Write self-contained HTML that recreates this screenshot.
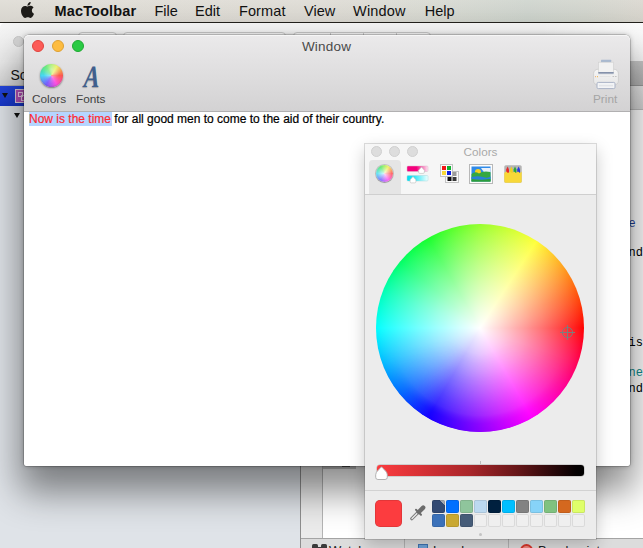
<!DOCTYPE html>
<html>
<head>
<meta charset="utf-8">
<title>MacToolbar</title>
<style>
html,body{margin:0;padding:0;}
body{width:643px;height:548px;overflow:hidden;position:relative;background:#fff;font-family:"Liberation Sans",sans-serif;}
.abs{position:absolute;}
/* ---------- background app (IDE) ---------- */
#bgwin{left:0;top:23px;width:643px;height:525px;background:#fff;border-top-left-radius:5px;overflow:hidden;}
#bgtitle{left:0;top:0;width:643px;height:38px;background:linear-gradient(#f6f6f6,#ebebeb);}
.tbbtn{top:9px;height:20px;border:1px solid #c9c9c9;border-radius:4px;background:linear-gradient(#fdfdfd,#f2f2f2);box-sizing:border-box;}
#bglight{left:13px;top:13px;width:11px;height:11px;border-radius:50%;background:#d6d6d6;border:1px solid #c8c8c8;box-sizing:border-box;}
#padhdr{left:0;top:38px;width:301px;height:25px;background:linear-gradient(#ececec,#d6d6d6);border-bottom:1px solid #b8b8b8;box-sizing:border-box;}
#padhdr span{position:absolute;left:10.5px;top:5.5px;font-size:14px;color:#111;}
#sidebar{left:0;top:63px;width:300px;height:462px;background:#dfe3e8;}
#selrow{left:0;top:63px;width:300px;height:20px;background:linear-gradient(#2547e0,#1636c8);}
.tri{width:0;height:0;border-left:3.7px solid transparent;border-right:3.7px solid transparent;border-top:5.5px solid #111;}
#picon{left:15px;top:66px;width:14px;height:14px;background:#b550b8;border:1px solid #e0d0e0;box-sizing:border-box;}
#rightdark{left:600px;top:38px;width:43px;height:25px;background:linear-gradient(#c6c6c6,#b4b4b4);border-bottom:1px solid #9a9a9a;box-sizing:border-box;}
#rightlite{left:600px;top:63px;width:43px;height:24px;background:linear-gradient(#e8e8e8,#d4d4d4);border-bottom:1px solid #bcbcbc;box-sizing:border-box;}
#vline1{left:300px;top:63px;width:1px;height:462px;background:#8e8e8e;}
#gutter{left:301px;top:63px;width:21px;height:452px;background:#ebebeb;}
#vline2{left:322px;top:63px;width:1px;height:452px;background:#b4b4b4;}
#hbar{left:323px;top:443px;width:33px;height:3px;background:#c6c6c6;}
.code{font-family:"Liberation Mono",monospace;font-size:12px;line-height:15px;white-space:pre;}
#bottombar{left:301px;top:515px;width:342px;height:10px;background:#dcdcdc;border-top:1px solid #a4a4a4;}
.bdiv{top:516px;width:1px;height:9px;background:#b4b4b4;}
.btxt{top:520px;font-size:13px;color:#222;white-space:nowrap;}
/* ---------- menu bar ---------- */
#menubar{left:0;top:0;width:643px;height:22px;background:linear-gradient(rgba(255,255,255,0.12),rgba(0,0,0,0.03)),linear-gradient(90deg,#dedbd4 0%,#dddad3 50%,#d6d8d0 68%,#cdd3cc 82%,#d1d4cc 91%,#d9d6ce 100%);border-bottom:1px solid #23211c;}
.mi{top:2px;font-size:14.5px;color:#111;white-space:nowrap;line-height:18px;}
/* ---------- front window ---------- */
#win{left:24px;top:35px;width:606px;height:431px;border-radius:5px 5px 2px 2px;background:#fff;box-shadow:0 0 0 0.5px rgba(0,0,0,0.3),0 22px 36px 4px rgba(0,0,0,0.45),0 0 5px rgba(0,0,0,0.28);}
#wtop{left:0;top:0;width:606px;height:76px;border-radius:5px 5px 0 0;background:linear-gradient(#ebeaeb,#d3d2d3);border-bottom:1px solid #b1b0b1;box-shadow:inset 0 1px 0 #f6f6f6;}
.light{top:5px;width:12px;height:12px;border-radius:50%;box-sizing:border-box;}
#wtitle{left:-0.5px;top:3.5px;width:606px;text-align:center;font-size:13.5px;color:#4a4a4a;line-height:16px;letter-spacing:0.2px;}
.tlabel{font-size:11.8px;color:#3f3f3f;white-space:nowrap;line-height:12px;}
#doc{left:5px;top:77px;font-size:12px;line-height:14px;color:#000;white-space:nowrap;-webkit-text-stroke:0.2px;}
#doc .sel{background:#b5d5ff;color:#ff2a30;padding:0 1px 0 0;margin-right:-1px;}
/* ---------- colors panel ---------- */
#panel{left:365px;top:144px;width:231px;height:395px;background:#ececec;box-shadow:0 0 0 1px rgba(0,0,0,0.13),0 6px 16px rgba(0,0,0,0.22);}
#ptop{left:0;top:0;width:231px;height:51px;background:#f6f6f6;border-bottom:1px solid #cfcfcf;box-sizing:border-box;}
.plight{top:3px;width:11px;height:11px;border-radius:50%;background:#dddddd;border:1px solid #d0d0d0;box-sizing:border-box;}
#ptitle{left:0;top:1px;width:231px;text-align:center;font-size:11.7px;color:#a9a9a9;line-height:16px;}
#seltab{left:4px;top:17px;width:32px;height:34px;background:#e5e5e5;border-radius:4px 4px 0 0;}
#wheel{left:11.4px;top:81px;width:208px;height:208px;border-radius:50%;background:radial-gradient(circle closest-side,rgba(255,255,255,1.000) 0%,rgba(255,255,255,0.956) 5%,rgba(255,255,255,0.911) 10%,rgba(255,255,255,0.867) 15%,rgba(255,255,255,0.822) 20%,rgba(255,255,255,0.776) 25%,rgba(255,255,255,0.731) 30%,rgba(255,255,255,0.684) 35%,rgba(255,255,255,0.638) 40%,rgba(255,255,255,0.591) 45%,rgba(255,255,255,0.543) 50%,rgba(255,255,255,0.495) 55%,rgba(255,255,255,0.446) 60%,rgba(255,255,255,0.397) 65%,rgba(255,255,255,0.347) 70%,rgba(255,255,255,0.295) 75%,rgba(255,255,255,0.243) 80%,rgba(255,255,255,0.188) 85%,rgba(255,255,255,0.132) 90%,rgba(255,255,255,0.072) 95%,rgba(255,255,255,0.000) 100%),conic-gradient(from 90deg,rgb(255,0,0) 0deg,rgb(255,0,85) 20deg,rgb(255,0,170) 40deg,rgb(255,0,255) 60deg,rgb(200,0,255) 75deg,rgb(140,0,255) 90deg,rgb(100,0,255) 100deg,rgb(20,0,255) 120deg,rgb(0,100,255) 140deg,rgb(0,185,255) 160deg,rgb(0,255,255) 180deg,rgb(0,255,185) 200deg,rgb(0,255,100) 220deg,rgb(24,255,44) 240deg,rgb(90,255,42) 255deg,rgb(150,255,44) 270deg,rgb(200,255,50) 285deg,rgb(255,255,56) 303deg,rgb(255,178,36) 320deg,rgb(255,85,10) 340deg,rgb(255,0,0) 360deg);}
#wheelrim{left:11.4px;top:81px;width:208px;height:208px;border-radius:50%;background:conic-gradient(from 90deg,rgb(255,0,0) 0deg,rgb(255,0,85) 20deg,rgb(255,0,170) 40deg,rgb(255,0,255) 60deg,rgb(200,0,255) 75deg,rgb(140,0,255) 90deg,rgb(100,0,255) 100deg,rgb(20,0,255) 120deg,rgb(0,100,255) 140deg,rgb(0,185,255) 160deg,rgb(0,255,255) 180deg,rgb(0,255,185) 200deg,rgb(0,255,100) 220deg,rgb(24,255,44) 240deg,rgb(90,255,42) 255deg,rgb(150,255,44) 270deg,rgb(200,255,50) 285deg,rgb(255,255,56) 303deg,rgb(255,178,36) 320deg,rgb(255,85,10) 340deg,rgb(255,0,0) 360deg);-webkit-mask-image:radial-gradient(circle closest-side,rgba(0,0,0,0) 25%,rgba(0,0,0,0.22) 84%,rgba(0,0,0,0.75) 92%,rgba(0,0,0,0.9) 100%),conic-gradient(from 90deg,rgba(0,0,0,0) 20deg,#000 70deg,#000 125deg,rgba(0,0,0,0) 165deg);-webkit-mask-composite:source-in;mask-image:radial-gradient(circle closest-side,rgba(0,0,0,0) 25%,rgba(0,0,0,0.22) 84%,rgba(0,0,0,0.75) 92%,rgba(0,0,0,0.9) 100%),conic-gradient(from 90deg,rgba(0,0,0,0) 20deg,#000 70deg,#000 125deg,rgba(0,0,0,0) 165deg);mask-composite:intersect;}
#slider{left:12px;top:322px;width:207px;height:11px;border-radius:3px;background:linear-gradient(90deg,#fc3c3f 0%,#d93236 20%,#a8262a 45%,#651618 68%,#2a080a 85%,#050001 96%,#000 100%);box-shadow:0 0 0 0.5px rgba(0,0,0,0.25);}
#pdiv{left:0;top:347px;width:231px;height:1px;background:#d2d2d2;}
#bigsw{left:10px;top:357px;width:27px;height:27px;border-radius:5px;background:#fc3c3f;box-shadow:inset 0 0 0 0.5px rgba(0,0,0,0.2);}
.sw{width:13px;height:13px;border-radius:2px;box-sizing:border-box;box-shadow:inset 0 0 0 0.5px rgba(0,0,0,0.18);}
.sw.e{background:#efefef;box-shadow:inset 0 0 0 1px #dadada;}
</style>
</head>
<body>

<!-- ================= background IDE window ================= -->
<div id="bgwin" class="abs">
  <div id="bgtitle" class="abs"></div>
  <div class="abs" style="left:540px;top:0;width:103px;height:38px;background:linear-gradient(90deg,rgba(255,255,255,0),rgba(255,255,255,0.65) 70%);"></div>
  <div class="abs tbbtn" style="left:78px;width:39px;"></div>
  <div class="abs tbbtn" style="left:123px;width:163px;"></div>
  <div class="abs tbbtn" style="left:293px;width:138px;"></div>
  <div class="abs" style="left:330px;top:10px;width:1px;height:19px;background:#cfcfcf;"></div>
  <div class="abs" style="left:363px;top:10px;width:1px;height:19px;background:#cfcfcf;"></div>
  <div class="abs" style="left:396px;top:10px;width:1px;height:19px;background:#cfcfcf;"></div>
  <div id="bglight" class="abs"></div>
  <div id="padhdr" class="abs"><span>Solution</span></div>
  <div id="sidebar" class="abs"></div>
  <div id="selrow" class="abs"></div>
  <div class="abs tri" style="left:1.8px;top:69.8px;"></div>
  <div id="picon" class="abs"><i style="position:absolute;left:2px;top:2px;width:5px;height:5px;border:1px solid #f0d0f0;box-sizing:border-box;"></i><i style="position:absolute;left:5px;top:5px;width:6px;height:6px;border:1px solid #f0d0f0;box-sizing:border-box;"></i></div>
  <div class="abs tri" style="left:13.7px;top:90px;"></div>
  <div id="rightdark" class="abs"></div>
  <div id="rightlite" class="abs"></div>
  <div id="vline1" class="abs"></div>
  <div id="gutter" class="abs"></div>
  <div id="vline2" class="abs"></div>
  <div id="hbar" class="abs"></div>
  <div class="abs" style="left:342px;top:443px;width:8px;height:1px;background:#555;"></div>
  <div class="abs code" style="left:556.6px;top:193.6px;color:#1f3f9a;">AppDelegate</div>
  <div class="abs code" style="left:585.4px;top:223.4px;color:#000;">mainWind<span style="color:#e8a020;">"</span></div>
  <div class="abs code" style="left:614.2px;top:313.2px;color:#000;">this<span style="color:#e8a020;">"</span></div>
  <div class="abs code" style="left:628.6px;top:343.3px;color:#0d8b8b;">new</div>
  <div class="abs code" style="left:585.4px;top:358.5px;color:#000;">mainWind<span style="color:#e8a020;">"</span></div>
  <div id="bottombar" class="abs"></div>
  <div class="abs bdiv" style="left:404px;"></div>
  <div class="abs bdiv" style="left:508px;"></div>
  <svg class="abs" style="left:312px;top:521px;" width="15" height="8" viewBox="0 0 15 8"><rect x="0" y="0" width="6" height="8" rx="1.5" fill="#3a3a3a"/><rect x="9" y="0" width="6" height="8" rx="1.5" fill="#3a3a3a"/><rect x="5" y="3" width="5" height="3" fill="#3a3a3a"/></svg>
  <div class="abs btxt" style="left:329px;">Watch</div>
  <div class="abs" style="left:418px;top:521px;width:10px;height:6px;background:#6fa3d8;border:1px solid #3f74b3;box-sizing:border-box;"></div>
  <div class="abs btxt" style="left:433px;">Locals</div>
  <div class="abs" style="left:520px;top:521px;width:13px;height:13px;border-radius:50%;background:#f08a80;border:2px solid #d8362c;box-sizing:border-box;"></div>
  <div class="abs btxt" style="left:538px;">Breakpoints</div>
</div>

<!-- ================= menu bar ================= -->
<div id="menubar" class="abs">
  <svg class="abs" style="left:21px;top:2px;" width="13" height="16" viewBox="0 0 814 1000">
    <path fill="#1d1b18" d="M788.100 340.900c-5.800 4.500-108.200 62.200-108.200 190.500 0 148.400 130.300 200.900 134.200 202.200-.6 3.200-20.700 71.900-68.700 141.900-42.800 61.600-87.500 123.100-155.500 123.100s-85.500-39.500-164-39.500c-76.500 0-103.700 40.800-165.900 40.800s-105.600-57-155.500-127C46.700 790.700 0 663 0 541.800c0-194.400 126.400-297.500 250.800-297.500 66.100 0 121.200 43.400 162.700 43.400 39.500 0 101.100-46 176.300-46 28.500 0 130.900 2.600 198.300 99.200zm-234-181.500c31.100-36.900 53.100-88.100 53.100-139.300 0-7.100-.6-14.300-1.900-20.100-50.600 1.900-110.800 33.700-147.100 75.800-28.500 32.400-55.100 83.600-55.100 135.500 0 7.800 1.300 15.600 1.900 18.100 3.200.6 8.400 1.300 13.600 1.300 45.400 0 102.500-30.400 135.500-71.300z"/>
  </svg>
  <div class="abs mi" style="left:54.5px;font-weight:bold;letter-spacing:0.15px;">MacToolbar</div>
  <div class="abs mi" style="left:154.5px;">File</div>
  <div class="abs mi" style="left:195px;">Edit</div>
  <div class="abs mi" style="left:239px;letter-spacing:0.1px;">Format</div>
  <div class="abs mi" style="left:304px;">View</div>
  <div class="abs mi" style="left:353px;letter-spacing:0.2px;">Window</div>
  <div class="abs mi" style="left:424.7px;">Help</div>
</div>

<!-- ================= front window ================= -->
<div id="win" class="abs">
  <div id="wtop" class="abs"></div>
  <div class="abs light" style="left:8px;background:#fc5b57;border:0.5px solid #e0443e;"></div>
  <div class="abs light" style="left:28px;background:#fdbc40;border:0.5px solid #dea032;"></div>
  <div class="abs light" style="left:48px;background:#2aca44;border:0.5px solid #1fa932;"></div>
  <div id="wtitle" class="abs">Window</div>

  <!-- Colors toolbar item -->
  <div class="abs" style="left:15.5px;top:29px;width:23px;height:23px;border-radius:50%;background:radial-gradient(circle at 50% 22%,rgba(255,255,255,0.45) 0%,rgba(255,255,255,0) 45%),radial-gradient(circle closest-side,rgba(255,255,255,0.3) 0%,rgba(255,255,255,0) 70%),conic-gradient(from 90deg,#ff5a50,#ff50e0,#7a60ff,#48d8f0,#50e860,#e8f050,#ff5a50);box-shadow:0 1px 2px rgba(0,0,0,0.45),inset 0 -1px 2px rgba(0,0,0,0.15);"></div>
  <div class="abs tlabel" style="left:8px;top:58px;">Colors</div>
  <!-- Fonts toolbar item -->
  <div class="abs" id="fontA" style="left:56.5px;top:27px;width:22px;height:30px;text-align:center;font-family:'Liberation Serif',serif;font-style:italic;font-weight:bold;font-size:31px;line-height:30px;color:#3f5f8e;text-shadow:0 1px 1px rgba(0,0,0,0.25);transform:scaleX(0.76) skewX(-4deg);transform-origin:50% 50%;">A</div>
  <div class="abs tlabel" style="left:52px;top:58px;">Fonts</div>
  <!-- Print toolbar item -->
  <svg class="abs" style="left:567px;top:24px;" width="30" height="32" viewBox="0 0 30 32">
    <defs>
      <linearGradient id="pb" x1="0" y1="0" x2="0" y2="1"><stop offset="0" stop-color="#f6f6f6"/><stop offset="1" stop-color="#e6e6e6"/></linearGradient>
      <linearGradient id="ps" x1="0" y1="0" x2="0" y2="1"><stop offset="0" stop-color="#75839f"/><stop offset="1" stop-color="#bcc3d0"/></linearGradient>
    </defs>
    <rect x="10" y="0.800" width="10.200" height="3" rx="0.500" fill="#a9b9d0"/>
    <rect x="2.600" y="10.300" width="24.800" height="15.800" rx="4.200" fill="url(#pb)" stroke="#c9c9c9" stroke-width="0.8"/>
    <rect x="7.500" y="3.200" width="15" height="10.200" fill="#f2f2f2" stroke="#cfcfcf" stroke-width="0.6"/>
    <rect x="7.300" y="13" width="15.400" height="2.200" fill="url(#ps)"/>
    <rect x="4" y="17.200" width="1" height="1" fill="#f0a860"/><rect x="6" y="17.200" width="1" height="1" fill="#f0b040"/>
    <rect x="8.500" y="17.400" width="11" height="0.600" fill="#dcdcdc"/>
    <rect x="21.500" y="17.200" width="1.600" height="0.800" fill="#b8b8b8"/><rect x="24" y="17.200" width="1.600" height="0.800" fill="#b8b8b8"/>
    <rect x="6" y="23.400" width="18" height="6.200" rx="1.300" fill="#f3f4f6" stroke="#a9b2c6" stroke-width="1"/>
    <rect x="8" y="25.800" width="14" height="1.600" fill="#e2e4e8"/>
  </svg>
  <div class="abs tlabel" style="left:569px;top:58px;color:#a5a5a5;">Print</div>

  <div id="doc" class="abs"><span class="sel">Now is the time</span> for all good men to come to the aid of their country.</div>
</div>

<!-- ================= colors panel ================= -->
<div id="panel" class="abs">
  <div id="ptop" class="abs"></div>
  <div class="abs" style="left:0;top:-1px;width:231px;height:396px;">
  <div class="abs plight" style="left:6px;"></div>
  <div class="abs plight" style="left:24px;"></div>
  <div class="abs plight" style="left:42px;"></div>
  <div id="ptitle" class="abs">Colors</div>
  <div id="seltab" class="abs"></div>
  <div class="abs" style="left:0;top:51px;width:231px;height:1px;background:#cfcfcf;"></div>
  <!-- wheel tab icon -->
  <div class="abs" style="left:11px;top:22px;width:17px;height:17px;border-radius:50%;background:radial-gradient(circle closest-side,rgba(255,255,255,0.8) 0%,rgba(255,255,255,0.1) 85%),conic-gradient(from 90deg,#ff5a5a,#ff5af0,#7a6cff,#55e0f0,#5ae86a,#f0f05a,#ff5a5a);box-shadow:0 0 0 1px rgba(0,0,0,0.16),0 1px 1px rgba(0,0,0,0.2);"></div>
  <!-- sliders tab icon -->
  <svg class="abs" style="left:41px;top:21px;" width="24" height="22" viewBox="0 0 24 22">
    <defs>
      <linearGradient id="g1" x1="0" x2="1"><stop offset="0" stop-color="#f4007c"/><stop offset="0.45" stop-color="#f4007c"/><stop offset="1" stop-color="#fde6f2"/></linearGradient>
      <linearGradient id="g2" x1="0" x2="1"><stop offset="0" stop-color="#00dcf0"/><stop offset="0.3" stop-color="#20e4f4"/><stop offset="1" stop-color="#f0ffff"/></linearGradient>
    </defs>
    <rect x="1" y="2" width="21" height="5.500" rx="1" fill="url(#g1)" stroke="#d8b8c8" stroke-width="0.5"/>
    <rect x="1" y="11.500" width="21" height="5.500" rx="1" fill="url(#g2)" stroke="#a8d8dc" stroke-width="0.5"/>
    <path d="M15.500 3 L18.400 6.200 V8.200 Q18.400 9.400 17.200 9.400 H13.800 Q12.600 9.400 12.600 8.200 V6.200 Z" fill="#fff" stroke="#b8b8b8" stroke-width="0.6"/>
    <path d="M7 12.500 L9.900 15.700 V17.700 Q9.900 18.900 8.700 18.900 H5.300 Q4.100 18.900 4.100 17.700 V15.700 Z" fill="#fff" stroke="#b8b8b8" stroke-width="0.6"/>
  </svg>
  <!-- palette tab icon -->
  <svg class="abs" style="left:75px;top:21px;" width="19" height="19" viewBox="0 0 19 19">
    <rect x="5.500" y="7.500" width="13" height="11" fill="#fafafa" stroke="#c4c4c4" stroke-width="1"/>
    <rect x="0.500" y="0.500" width="12" height="12" fill="#fafafa" stroke="#c4c4c4" stroke-width="1"/>
    <rect x="2" y="2" width="4" height="4" fill="#f01818"/><rect x="7" y="2" width="4" height="4" fill="#10b030"/>
    <rect x="2" y="7" width="4" height="4" fill="#f8d838"/><rect x="7" y="7" width="4" height="4" fill="#1020e0"/>
    <rect x="12.500" y="8" width="4" height="4" fill="#9a9a9a"/>
    <rect x="7.500" y="13" width="4" height="4" fill="#101010"/><rect x="12.500" y="13" width="4" height="4" fill="#383838"/>
  </svg>
  <!-- image tab icon -->
  <svg class="abs" style="left:104px;top:21px;" width="24" height="20" viewBox="0 0 24 20">
    <rect x="0.500" y="0.500" width="23" height="19" fill="#fdfdfd" stroke="#b8b8b8" stroke-width="1"/>
    <rect x="2.500" y="2.500" width="19" height="15" fill="#2f8ae8"/>
    <path d="M12 4 h9.500 v5 h-6z" fill="#e8f0fa"/>
    <circle cx="9" cy="8" r="3" fill="#f8d020"/>
    <path d="M2.500 10 Q6 7 10 9.500 Q14 6.500 21.500 8 V17.500 H2.500Z" fill="#35a840"/>
    <path d="M2.500 13 Q9 11.500 14 13 T21.500 12.500 V15 Q14 16.500 2.500 15Z" fill="#2a80d8"/>
    <path d="M2.500 15.500 Q12 17 21.500 15 V17.500 H2.500Z" fill="#2c9c3c"/>
  </svg>
  <!-- crayons tab icon -->
  <svg class="abs" style="left:139px;top:22px;" width="18" height="18" viewBox="0 0 18 18">
    <rect x="0.300" y="0.300" width="17.400" height="17.400" rx="1.500" fill="#b4b4b4"/>
    <path d="M2.200 9 V4.500 L3.600 1.500 L5 4.500 V9Z" fill="#e82828"/>
    <path d="M6 9 V4.500 L7.400 1.500 L8.800 4.500 V9Z" fill="#f0d020"/>
    <path d="M9.600 9 V4.500 L11 1.500 L12.400 4.500 V9Z" fill="#28a838"/>
    <path d="M13.200 9 V4.500 L14.600 1.500 L16 4.500 V9Z" fill="#2838e0"/>
    <path d="M0.300 8 L2.200 6.500 L4 8 L6 6.500 L8 8 L10 6.500 L12 8 L14 6.500 L16 8 L17.700 6.500 V16.200 Q17.700 17.700 16.200 17.700 H1.800 Q0.300 17.700 0.300 16.200Z" fill="#f8d838"/>
  </svg>

  <div id="wheel" class="abs"></div>
  <div id="wheelrim" class="abs"></div>
  <!-- crosshair -->
  <svg class="abs" style="left:194px;top:181px;" width="17" height="17" viewBox="0 0 17 17">
    <circle cx="8.500" cy="8.500" r="5.100" fill="none" stroke="#7d7d7d" stroke-width="1"/>
    <path d="M8.500 1 V16 M1 8.500 H16" stroke="#7d7d7d" stroke-width="1"/>
  </svg>
  <div class="abs" style="left:115px;top:318px;width:1px;height:3px;background:#bdbdbd;"></div>
  <div id="slider" class="abs"></div>
  <svg class="abs" style="left:10px;top:323px;" width="14" height="15" viewBox="0 0 14 15">
    <path d="M6.500 0.800 C8.200 3 12.300 5.600 12.300 8.600 V11.300 Q12.300 13.500 10.100 13.500 H2.900 Q0.700 13.500 0.700 11.300 V8.600 C0.700 5.600 4.800 3 6.500 0.800 Z" fill="#fff" stroke="#aaaaaa" stroke-width="0.9"/>
  </svg>
  <div id="pdiv" class="abs"></div>
  <div id="bigsw" class="abs"></div>
  <!-- eyedropper -->
  <svg class="abs" style="left:45px;top:361px;" width="17" height="17" viewBox="0 0 17 17">
    <path d="M1.800 14.700 L8 8.500" stroke="#7a7a7a" stroke-width="3.200" stroke-linecap="round"/>
    <path d="M2 14.500 L8 8.500" stroke="#ececec" stroke-width="1.300" stroke-linecap="round"/>
    <path d="M6 5.800 L11 10.800" stroke="#6c6c6c" stroke-width="2" stroke-linecap="round"/>
    <path d="M8.800 8 L13.200 3.600" stroke="#6c6c6c" stroke-width="4.400" stroke-linecap="round"/>
  </svg>
  <!-- swatches row 1 -->
  <div class="abs sw" style="left:67px;top:357px;background:linear-gradient(225deg,#a4a8b0 0,#a4a8b0 20%,#334a73 22%);"></div>
  <div class="abs sw" style="left:81px;top:357px;background:#0070ff;"></div>
  <div class="abs sw" style="left:95px;top:357px;background:#8fc59c;"></div>
  <div class="abs sw" style="left:109px;top:357px;background:#bcd9f0;"></div>
  <div class="abs sw" style="left:123px;top:357px;background:#00203f;"></div>
  <div class="abs sw" style="left:137px;top:357px;background:#00bfff;"></div>
  <div class="abs sw" style="left:151px;top:357px;background:#828282;"></div>
  <div class="abs sw" style="left:165px;top:357px;background:#87d3f8;"></div>
  <div class="abs sw" style="left:179px;top:357px;background:#80c280;"></div>
  <div class="abs sw" style="left:193px;top:357px;background:#d4681f;"></div>
  <div class="abs sw" style="left:207px;top:357px;background:#dfff6a;"></div>
  <!-- swatches row 2 -->
  <div class="abs sw" style="left:67px;top:371px;background:#3b71b9;"></div>
  <div class="abs sw" style="left:81px;top:371px;background:#c9a832;"></div>
  <div class="abs sw" style="left:95px;top:371px;background:#465c78;"></div>
  <div class="abs sw e" style="left:109px;top:371px;"></div>
  <div class="abs sw e" style="left:123px;top:371px;"></div>
  <div class="abs sw e" style="left:137px;top:371px;"></div>
  <div class="abs sw e" style="left:151px;top:371px;"></div>
  <div class="abs sw e" style="left:165px;top:371px;"></div>
  <div class="abs sw e" style="left:179px;top:371px;"></div>
  <div class="abs sw e" style="left:193px;top:371px;"></div>
  <div class="abs sw e" style="left:207px;top:371px;"></div>
  <div class="abs" style="left:114px;top:390px;width:3px;height:3px;border-radius:50%;background:#c4c4c4;"></div>
  </div>
</div>

</body>
</html>
